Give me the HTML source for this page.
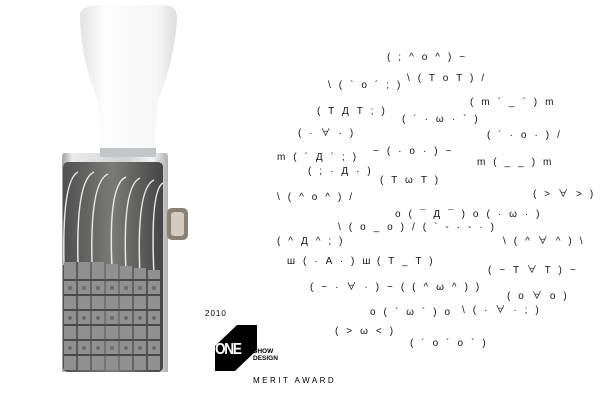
<!DOCTYPE html>
<html><head><meta charset="utf-8"><style>
html,body{margin:0;padding:0;background:#fff;width:600px;height:410px;overflow:hidden;position:relative;font-family:"Liberation Sans","Noto Sans CJK JP",sans-serif}
.e{position:absolute;font-size:10px;letter-spacing:2.6px;color:#111;white-space:nowrap;line-height:12px}
</style></head><body>
<svg width="600" height="410" style="position:absolute;left:0;top:0">
<defs>
<linearGradient id="h" x1="0" x2="1"><stop offset="0" stop-color="#e2e2e2"/><stop offset=".25" stop-color="#fdfdfd"/><stop offset=".8" stop-color="#f6f6f6"/><stop offset="1" stop-color="#dcdcdc"/></linearGradient>
<linearGradient id="c" x1="0" x2="1"><stop offset="0" stop-color="#a0a0a0"/><stop offset=".1" stop-color="#ececec"/><stop offset=".6" stop-color="#d0d0d0"/><stop offset=".85" stop-color="#f4f4f4"/><stop offset="1" stop-color="#b0b0b0"/></linearGradient>
<linearGradient id="w" x1="0" x2="1"><stop offset="0" stop-color="#505050"/><stop offset=".5" stop-color="#7a7a78"/><stop offset="1" stop-color="#454545"/></linearGradient>
</defs>
<path d="M80 14 Q82 5 100 5 L165 5 Q178 6 177 20 Q174 60 160 95 Q154 115 156 152 L100 152 Q102 118 96 95 Q80 55 80 14 Z" fill="url(#h)"/>
<path d="M64 153 L166 153 Q168 153 168 160 L168 372 L62 372 L62 160 Q62 153 64 153 Z" fill="url(#c)"/>
<rect x="100" y="148" width="56" height="9" fill="#c2c6ca"/>
<rect x="63" y="162" width="100" height="210" rx="5" fill="url(#w)"/>
<g stroke="#e6e6e6" stroke-width="1.5" fill="none">
<path d="M64 265 Q62 180 78 172"/><path d="M78 262 Q76 180 94 172"/><path d="M92 262 Q90 182 108 174"/><path d="M112 268 Q108 184 126 177"/><path d="M126 272 Q122 186 140 178"/><path d="M140 276 Q136 188 154 180"/><path d="M154 276 Q150 190 163 183"/>
</g>
<g fill="#909090">
<rect x="64" y="262" width="12" height="108"/><rect x="78" y="262" width="12" height="108"/><rect x="92" y="262" width="12" height="108"/><rect x="106" y="264" width="12" height="106"/><rect x="120" y="266" width="12" height="104"/><rect x="134" y="268" width="12" height="102"/><rect x="148" y="270" width="12" height="100"/>
</g>
<g stroke="#4a4a4a" stroke-width="2">
<line x1="63" y1="280" x2="162" y2="280"/><line x1="63" y1="295" x2="162" y2="295"/><line x1="63" y1="310" x2="162" y2="310"/><line x1="63" y1="325" x2="162" y2="325"/><line x1="63" y1="340" x2="162" y2="340"/><line x1="63" y1="355" x2="162" y2="355"/>
</g>
<g fill="#6a6a6a"><circle cx="70" cy="288" r="2"/><circle cx="84" cy="288" r="2"/><circle cx="98" cy="288" r="2"/><circle cx="112" cy="288" r="2"/><circle cx="126" cy="288" r="2"/><circle cx="140" cy="288" r="2"/><circle cx="154" cy="288" r="2"/>
<circle cx="70" cy="318" r="2"/><circle cx="84" cy="318" r="2"/><circle cx="98" cy="318" r="2"/><circle cx="112" cy="318" r="2"/><circle cx="126" cy="318" r="2"/><circle cx="140" cy="318" r="2"/><circle cx="154" cy="318" r="2"/>
<circle cx="70" cy="348" r="2"/><circle cx="84" cy="348" r="2"/><circle cx="98" cy="348" r="2"/><circle cx="112" cy="348" r="2"/><circle cx="126" cy="348" r="2"/><circle cx="140" cy="348" r="2"/><circle cx="154" cy="348" r="2"/></g>
<rect x="167" y="208" width="21" height="32" rx="5" fill="#8a8072"/>
<rect x="171" y="212" width="13" height="24" rx="3" fill="#d2cbc0"/>
<path d="M237 325 L257 325 L257 350 L235 371 L215 371 L215 346 Z" fill="#000"/>
</svg>
<div style="position:absolute;left:205px;top:309px;font-size:8px;letter-spacing:1px">2010</div>
<div style="position:absolute;left:215px;top:341px;font-size:16px;font-weight:bold;color:#fff;letter-spacing:-1.5px;transform:scaleX(.85);transform-origin:left">ONE</div>
<div style="position:absolute;left:253px;top:348px;font-size:6.5px;font-weight:bold;line-height:7px">SHOW<br>DESIGN</div>
<div style="position:absolute;left:253px;top:376px;font-size:8px;letter-spacing:2.5px">MERIT AWARD</div>

<div class="e" style="left:387px;top:52px">( ; ^ o ^ ) ~</div>
<div class="e" style="left:407px;top:73px">\ ( T o T ) /</div>
<div class="e" style="left:328px;top:80px">\ ( ` o ´ ; )</div>
<div class="e" style="left:470px;top:97px">( m ´ _ ` ) m</div>
<div class="e" style="left:317px;top:106px">( T Д T ; )</div>
<div class="e" style="left:402px;top:114px">( ´ · ω · ` )</div>
<div class="e" style="left:298px;top:128px">( · ∀ · )</div>
<div class="e" style="left:487px;top:130px">( ´ · o · ) /</div>
<div class="e" style="left:277px;top:152px">m ( ´ Д ` ; )</div>
<div class="e" style="left:373px;top:146px">~ ( · o · ) ~</div>
<div class="e" style="left:477px;top:157px">m ( _ _ ) m</div>
<div class="e" style="left:308px;top:166px">( ; · Д · )</div>
<div class="e" style="left:380px;top:175px">( T ω T )</div>
<div class="e" style="left:533px;top:189px">( &gt; ∀ &gt; )</div>
<div class="e" style="left:277px;top:192px">\ ( ^ o ^ ) /</div>
<div class="e" style="left:395px;top:209px">o ( ¯ Д ¯ ) o ( · ω · )</div>
<div class="e" style="left:338px;top:222px">\ ( o _ o ) / ( ` - · - · )</div>
<div class="e" style="left:277px;top:236px">( ^ Д ^ ; )</div>
<div class="e" style="left:503px;top:236px">\ ( ^ ∀ ^ ) \</div>
<div class="e" style="left:287px;top:256px">ш ( · A · ) ш</div>
<div class="e" style="left:377px;top:256px">( T _ T )</div>
<div class="e" style="left:488px;top:265px">( ~ T ∀ T ) ~</div>
<div class="e" style="left:310px;top:282px">( ~ · ∀ · ) ~ ( ( ^ ω ^ ) )</div>
<div class="e" style="left:507px;top:291px">( o ∀ o )</div>
<div class="e" style="left:370px;top:307px">o ( ` ω ´ ) o</div>
<div class="e" style="left:462px;top:305px">\ ( · ∀ · ; )</div>
<div class="e" style="left:335px;top:326px">( &gt; ω &lt; )</div>
<div class="e" style="left:410px;top:338px">( ´ o ´ o ` )</div>
</body></html>
